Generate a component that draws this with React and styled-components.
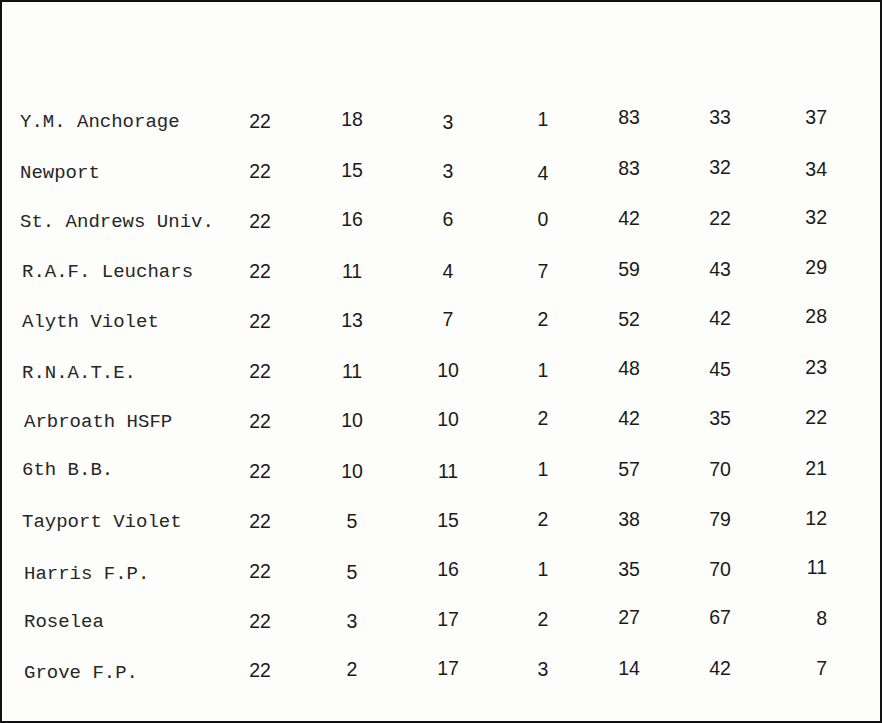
import React from "react";
import styled, { createGlobalStyle } from "styled-components";

const Global = createGlobalStyle`
  html, body { margin: 0; padding: 0; background: #fff; }
  #root { width: 882px; height: 723px; }
`;

const Sheet = styled.div`
  box-sizing: border-box;
  width: 882px;
  height: 723px;
  border: 2px solid #111;
  background: #fdfdfc;
  padding: 94px 0 0 0;
  overflow: hidden;
`;

const Table = styled.div`
  display: grid;
  grid-template-columns: 213px 90px 94px 98px 92px 80px 102px 56px;
  grid-auto-rows: 50px;
  align-items: center;
`;

const Name = styled.div`
  padding-left: ${(p) => p.$indent}px;
  font-family: "Courier New", "Nimbus Mono PS", "Nimbus Mono L", FreeMono, "Courier 10 Pitch", "Liberation Mono", monospace;
  font-size: 19px;
  color: #262626;
  white-space: nowrap;
  transform: translateY(${(p) => p.$dy}px);
`;

const Num = styled.div`
  font-family: "Liberation Sans", Arial, sans-serif;
  font-size: 19.5px;
  color: #1a1a1a;
  text-align: ${(p) => (p.$right ? "right" : "center")};
  transform: translateY(${(p) => p.$dy}px);
`;

const rows = [
  ["Y.M. Anchorage", 18, 1, [22, 18, 3, 1, 83, 33, 37], [0, -2, 1, -2, -4, -4, -4]],
  ["Newport", 18, 2, [22, 15, 3, 4, 83, 32, 34], [0, -1, 0, 2, -3, -4, -2]],
  ["St. Andrews Univ.", 18, 1, [22, 16, 6, 0, 42, 22, 32], [0, -2, -2, -2, -3, -3, -4]],
  ["R.A.F. Leuchars", 20, 1, [22, 11, 4, 7, 59, 43, 29], [0, 0, 0, 0, -2, -2, -4]],
  ["Alyth Violet", 20, 1, [22, 13, 7, 2, 52, 42, 28], [0, -1, -2, -2, -2, -3, -5]],
  ["R.N.A.T.E.", 20, 2, [22, 11, 10, 1, 48, 45, 23], [0, 0, -1, -1, -3, -2, -4]],
  ["Arbroath HSFP", 22, 1, [22, 10, 10, 2, 42, 35, 22], [0, -1, -2, -3, -3, -3, -4]],
  ["6th B.B.", 20, -1, [22, 10, 11, 1, 57, 70, 21], [0, 0, 0, -2, -2, -2, -3]],
  ["Tayport Violet", 20, 1, [22, 5, 15, 2, 38, 79, 12], [0, 0, -1, -2, -2, -2, -3]],
  ["Harris F.P.", 22, 3, [22, 5, 16, 1, 35, 70, 11], [0, 1, -2, -2, -2, -2, -4]],
  ["Roselea", 22, 1, [22, 3, 17, 2, 27, 67, 8], [0, 0, -2, -2, -4, -4, -3]],
  ["Grove F.P.", 22, 2, [22, 2, 17, 3, 14, 42, 7], [-1, -2, -3, -2, -3, -3, -3]],
];

export default function App() {
  return (
    <>
      <Global />
      <Sheet>
        <Table>
          {rows.map(([name, indent, ndy, nums, dys]) => (
            <React.Fragment key={name}>
              <Name $indent={indent} $dy={ndy}>{name}</Name>
              {nums.map((n, i) => (
                <Num key={i} $dy={dys[i]} $right={i === 6}>{n}</Num>
              ))}
            </React.Fragment>
          ))}
        </Table>
      </Sheet>
    </>
  );
}
